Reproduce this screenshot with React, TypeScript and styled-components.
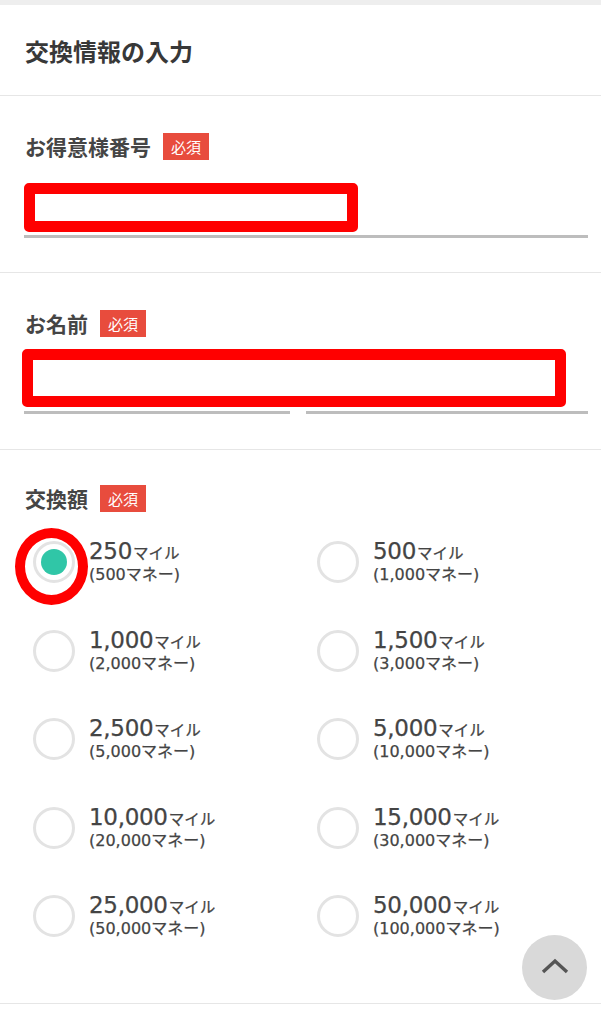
import styled, { createGlobalStyle } from 'styled-components';

const GlobalStyle = createGlobalStyle`
  body {
    margin: 0;
    background: #fff;
    font-family: "Noto Sans CJK JP", sans-serif;
    color: #333;
  }
`;

const options = [
  { miles: '250', money: '500', selected: true },
  { miles: '500', money: '1,000' },
  { miles: '1,000', money: '2,000' },
  { miles: '1,500', money: '3,000' },
  { miles: '2,500', money: '5,000' },
  { miles: '5,000', money: '10,000' },
  { miles: '10,000', money: '20,000' },
  { miles: '15,000', money: '30,000' },
  { miles: '25,000', money: '50,000' },
  { miles: '50,000', money: '100,000' },
];

const App = () => {
  return (
    <Page>
      <GlobalStyle />
      <TopStrip />
      <TitleBar>
        <Title>交換情報の入力</Title>
      </TitleBar>

      <Section $pt={37} $pb={34}>
        <LabelRow $gap={23}>
          <Label>お得意様番号</Label>
          <Badge>必須</Badge>
        </LabelRow>
        <Field>
          <Highlight $width={334} $height={49} $shift={0} />
        </Field>
      </Section>

      <Section $pt={37} $pb={35}>
        <LabelRow $gap={12}>
          <Label>お名前</Label>
          <Badge>必須</Badge>
        </LabelRow>
        <Highlight $width={544} $height={58} $shift={-2} />
        <NameLines>
          <Line />
          <Line />
        </NameLines>
      </Section>

      <Section $pt={35} $pb={66}>
        <LabelRow $gap={29}>
          <Label>交換額</Label>
          <Badge>必須</Badge>
        </LabelRow>
        <OptionGrid>
          {options.map((o) => (
            <Option key={o.miles}>
              <Radio>
                {o.selected && <Dot />}
                {o.selected && <Marker />}
              </Radio>
              <OptionText>
                <Miles>
                  {o.miles}
                  <Unit>マイル</Unit>
                </Miles>
                <Money>({o.money}マネー)</Money>
              </OptionText>
            </Option>
          ))}
        </OptionGrid>
      </Section>

      <ScrollTop aria-label="top">
        <svg width="28" height="16" viewBox="0 0 28 16">
          <polyline points="2,14 14,3 26,14" fill="none" stroke="#555" strokeWidth="3.4" />
        </svg>
      </ScrollTop>
    </Page>
  );
};

export default App;

const Page = styled.div`
  width: 601px;
  min-height: 1024px;
  background: #fff;
`;

const TopStrip = styled.div`
  height: 5px;
  background: #eeeeee;
`;

const TitleBar = styled.div`
  height: 90px;
  display: flex;
  align-items: center;
  padding-left: 25px;
  border-bottom: 1px solid #e6e6e6;
`;

const Title = styled.h1`
  margin: 0;
  font-size: 24px;
  font-weight: 700;
  color: #383838;
`;

const Section = styled.section<{ $pt: number; $pb: number }>`
  padding: ${(p) => p.$pt}px 13px ${(p) => p.$pb}px 24px;
  border-bottom: 1px solid #e6e6e6;
`;

const LabelRow = styled.div<{ $gap: number }>`
  display: flex;
  align-items: center;
  gap: 12px;
  height: 27px;
  margin-bottom: ${(p) => p.$gap}px;
  padding-left: 1px;
`;

const Label = styled.span`
  font-size: 21px;
  font-weight: 700;
  color: #454545;
  line-height: 27px;
`;

const Badge = styled.span`
  height: 27px;
  line-height: 27px;
  padding: 0 8px;
  font-size: 15px;
  background: #e84c3d;
  color: #fff;
`;

const Field = styled.div`
  padding-bottom: 3px;
  border-bottom: 3px solid #bdbdbd;
`;

const Highlight = styled.div<{ $width: number; $height: number; $shift: number }>`
  box-sizing: border-box;
  width: ${(p) => p.$width}px;
  height: ${(p) => p.$height}px;
  margin-left: ${(p) => p.$shift}px;
  border: 11px solid #ff0000;
  border-radius: 5px;
  background: #fff;
`;

const NameLines = styled.div`
  display: grid;
  grid-template-columns: 266px 1fr;
  gap: 16px;
  margin-top: 4px;
`;

const Line = styled.div`
  height: 3px;
  background: #bdbdbd;
`;

const OptionGrid = styled.div`
  display: grid;
  grid-template-columns: 284px 284px;
  grid-auto-rows: 42px;
  row-gap: 46.5px;
  margin-left: 9px;
`;

const Option = styled.label`
  display: flex;
  align-items: center;
  gap: 14px;
`;

const Radio = styled.span`
  position: relative;
  box-sizing: border-box;
  width: 42px;
  height: 42px;
  flex: none;
  border: 3px solid #e3e3e3;
  border-radius: 50%;
  display: flex;
  align-items: center;
  justify-content: center;
`;

const Dot = styled.span`
  width: 26px;
  height: 26px;
  border-radius: 50%;
  background: #30c6a7;
`;

const Marker = styled.span`
  position: absolute;
  left: -21px;
  top: -16px;
  box-sizing: border-box;
  width: 73px;
  height: 77px;
  border: 10px solid #ff0000;
  border-radius: 50%;
`;

const OptionText = styled.span`
  display: flex;
  flex-direction: column;
  color: #444;
  font-family: "DejaVu Sans", "Noto Sans CJK JP", sans-serif;
  -webkit-text-stroke: 0.25px #444;
`;

const Miles = styled.span`
  font-size: 23px;
  line-height: 24px;
  letter-spacing: -0.3px;
  white-space: nowrap;
`;

const Unit = styled.span`
  font-family: "Noto Sans CJK JP", sans-serif;
  font-size: 15.5px;
  letter-spacing: 0;
  margin-left: 1px;
`;

const Money = styled.span`
  font-size: 16px;
  line-height: 21px;
  white-space: nowrap;
`;

const ScrollTop = styled.button`
  position: fixed;
  right: 14px;
  bottom: 24px;
  width: 65px;
  height: 65px;
  border: none;
  border-radius: 50%;
  background: #d9d9d9;
  display: flex;
  align-items: center;
  justify-content: center;
  padding: 0 0 3px;
`;
